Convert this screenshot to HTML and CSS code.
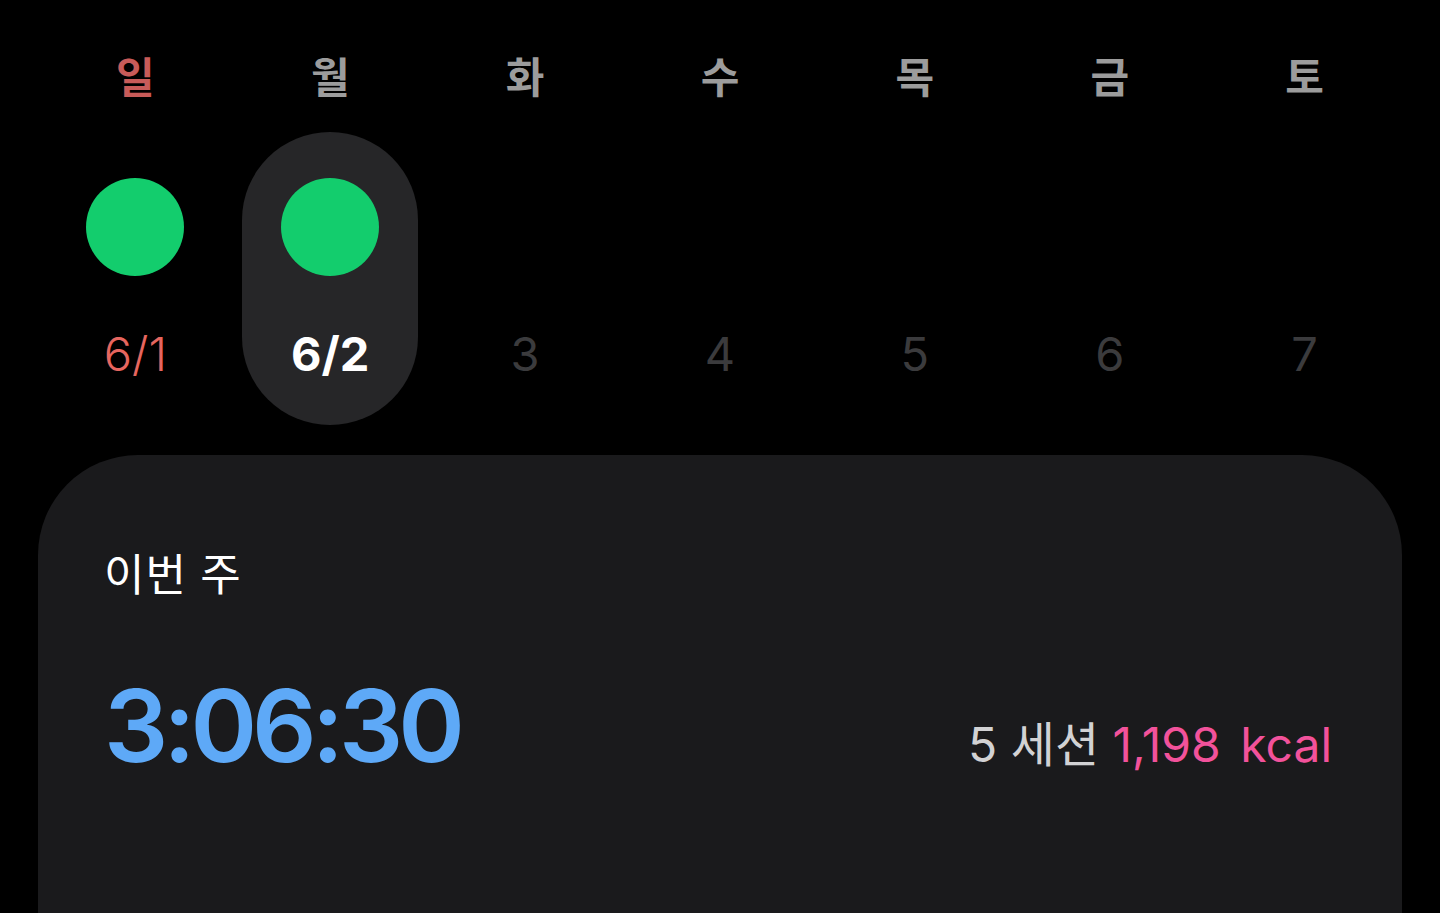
FILE: index.html
```html
<!DOCTYPE html>
<html lang="ko">

<head>
    <meta charset="utf-8">
    <meta name="viewport" content="width=device-width, initial-scale=1.0">
    <title>이번 주 운동</title>
    <link rel="stylesheet" href="styles.css">
</head>

<body>
    <div class="week">
        <div class="weekday sunday">일</div>
        <div class="weekday">월</div>
        <div class="weekday">화</div>
        <div class="weekday">수</div>
        <div class="weekday">목</div>
        <div class="weekday">금</div>
        <div class="weekday">토</div>

        <div class="day sunday">
            <div class="dot done"></div>
            <div class="date">6/1</div>
        </div>
        <div class="day today">
            <div class="dot done"></div>
            <div class="date">6/2</div>
        </div>
        <div class="day future">
            <div class="dot"></div>
            <div class="date">3</div>
        </div>
        <div class="day future">
            <div class="dot"></div>
            <div class="date">4</div>
        </div>
        <div class="day future">
            <div class="dot"></div>
            <div class="date">5</div>
        </div>
        <div class="day future">
            <div class="dot"></div>
            <div class="date">6</div>
        </div>
        <div class="day future">
            <div class="dot"></div>
            <div class="date">7</div>
        </div>
    </div>

    <div class="summary">
        <div class="summary-title">이번 주</div>
        <div class="summary-row">
            <div class="total-time">3:06:30</div>
            <div class="summary-stats">
                <span class="sessions">5 세션</span>
                <span class="kcal">1,198 kcal</span>
            </div>
        </div>
    </div>
</body>

</html>
```

FILE: styles.css
```css
body {
    margin: 0;
    background-color: #000;
    color: #fff;
    font-family: Inter, "Noto Sans CJK KR", sans-serif;
    overflow: hidden;
}

.week {
    display: grid;
    grid-template-columns: repeat(7, 1fr);
    padding: 50px 38px 0;
    row-gap: 32px;
}

.weekday {
    text-align: center;
    font-family: "Noto Sans CJK KR", sans-serif;
    font-size: 42px;
    font-weight: 700;
    line-height: 50px;
    color: #9c9c9c;
}

.weekday.sunday {
    color: #c85b59;
}

.day {
    width: 176px;
    height: 293px;
    justify-self: center;
    display: flex;
    flex-direction: column;
    align-items: center;
    border-radius: 88px;
}

.day.today {
    background-color: #262628;
}

.dot {
    width: 98px;
    height: 98px;
    margin-top: 46px;
    border-radius: 50%;
}

.dot.done {
    background-color: #13cd6d;
}

.date {
    margin-top: 48px;
    font-size: 47px;
    line-height: 60px;
    font-weight: 400;
    color: #3b3b3d;
}

.day.sunday .date {
    color: #e6665f;
    font-weight: 300;
}

.day.today .date {
    color: #fff;
    font-weight: 700;
}

.summary {
    margin: 30px 38px 0;
    height: 369px;
    padding: 89px 70px 0 66px;
    background-color: #1a1a1c;
    border-radius: 100px 100px 0 0;
}

.summary-title {
    font-family: "Noto Sans CJK KR", sans-serif;
    font-size: 44px;
    line-height: 56px;
    letter-spacing: 1px;
    color: #fff;
}

.summary-row {
    display: flex;
    justify-content: space-between;
    align-items: baseline;
    margin-top: 73px;
}

.total-time {
    font-size: 101px;
    line-height: 104px;
    font-weight: 600;
    letter-spacing: -5px;
    color: #5ea9f7;
}

.summary-stats {
    font-size: 48px;
    font-weight: 400;
}

.sessions {
    color: #d2d2d4;
}

.kcal {
    color: #f2529b;
    word-spacing: 6px;
}
```
